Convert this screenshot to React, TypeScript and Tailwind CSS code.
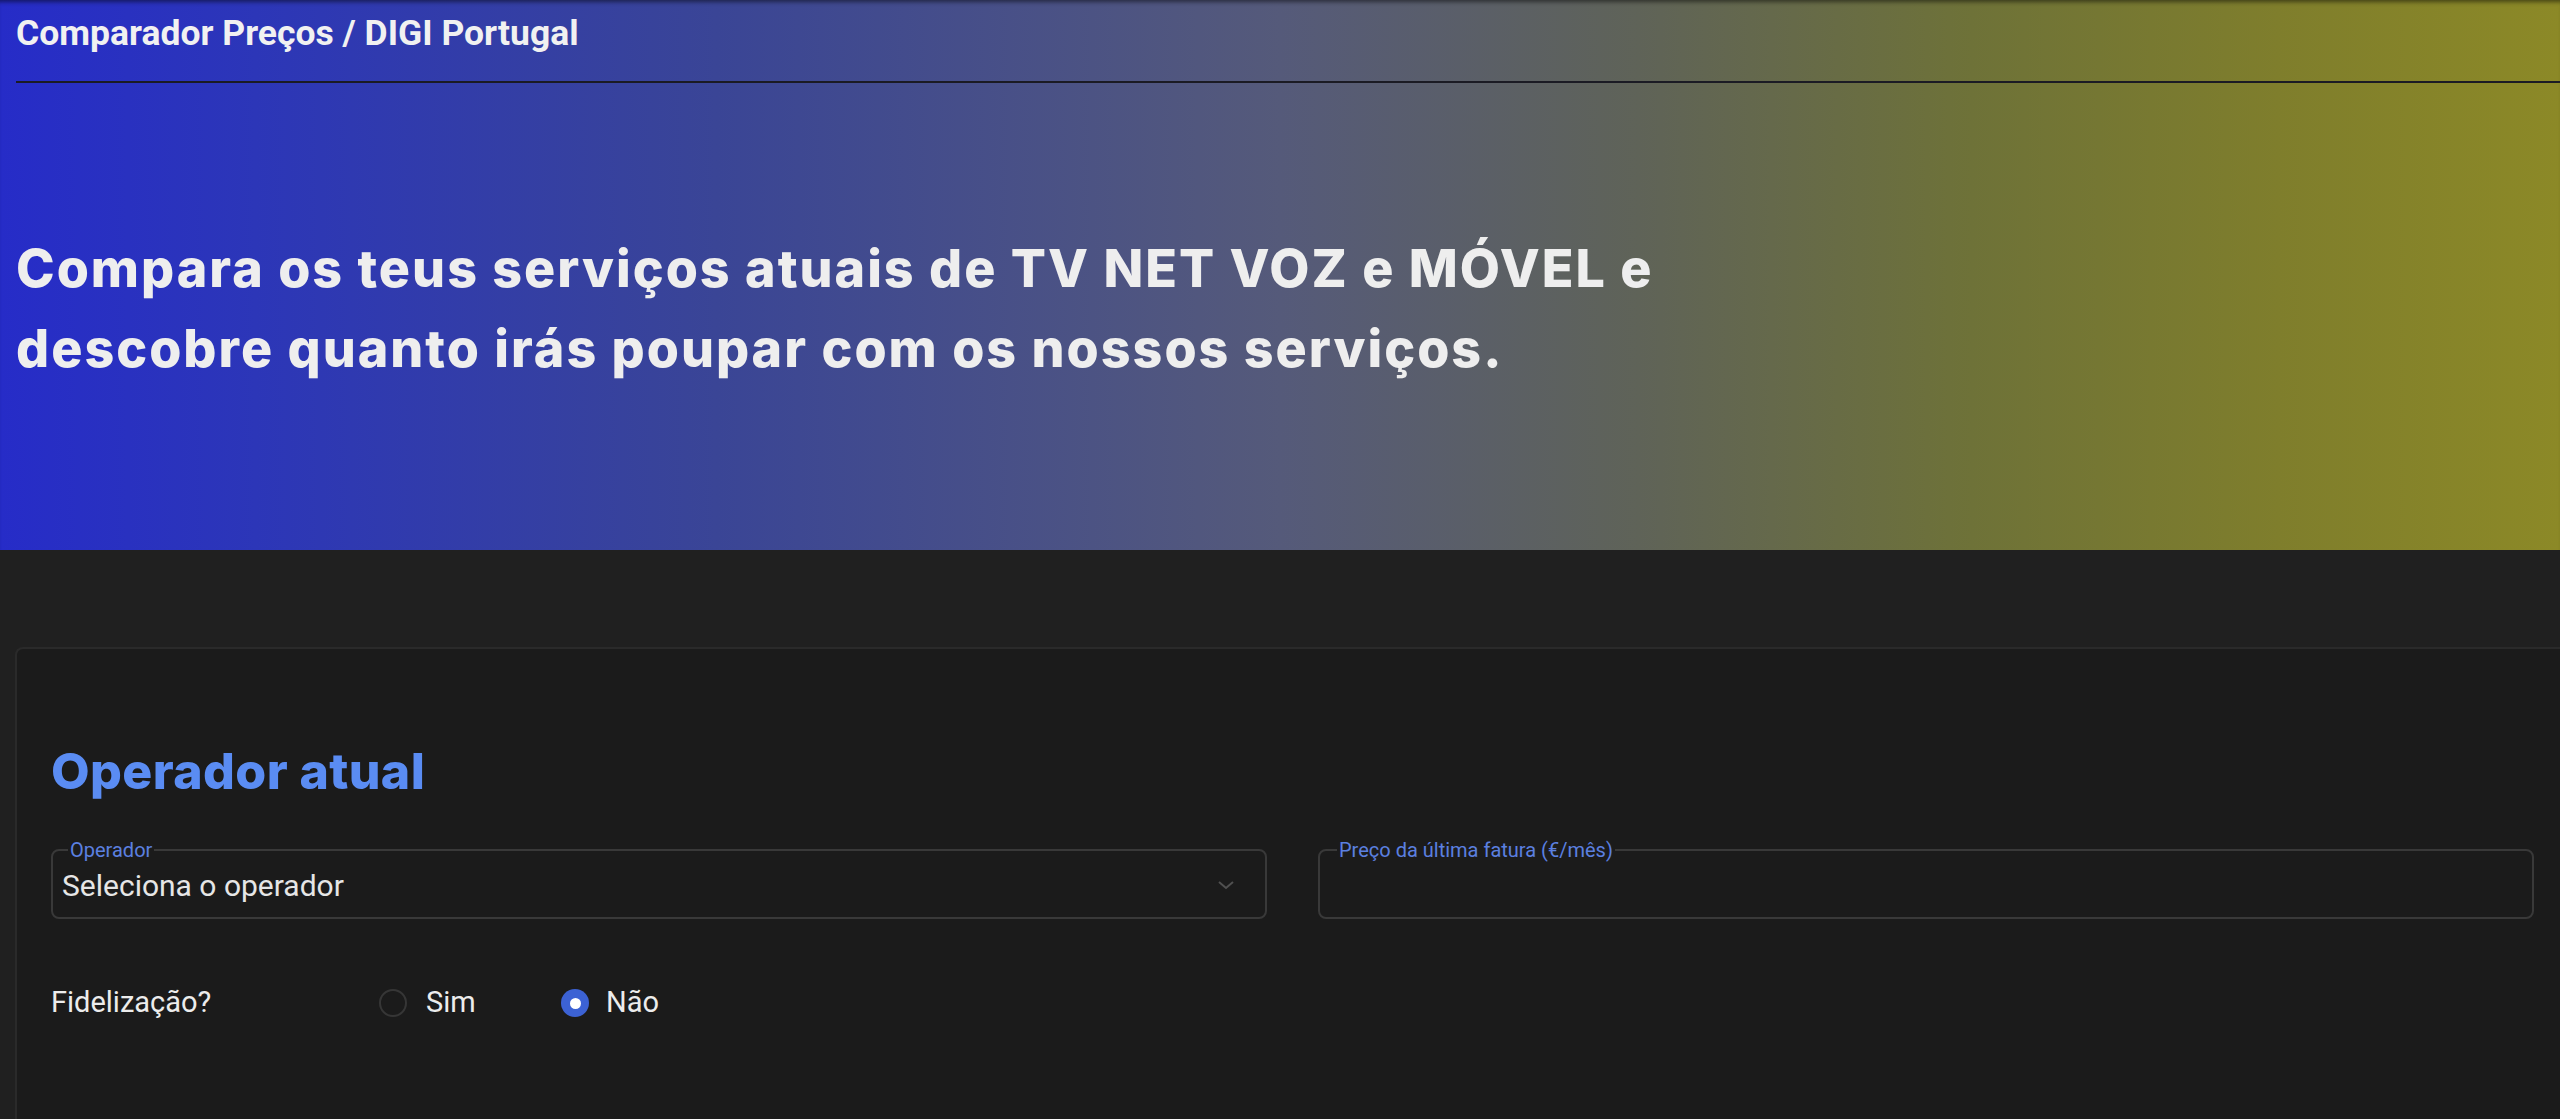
/**
 * Comparador de preços DIGI: hero with title, then "Operador atual" form card.
 */
import { useState } from "react";

function Radio({ checked }: { checked: boolean }) {
  return checked ? (
    <span className="flex h-[28px] w-[28px] items-center justify-center rounded-full bg-[#3c62d4]">
      <span className="h-[11px] w-[11px] rounded-full bg-white" />
    </span>
  ) : (
    <span className="h-[28px] w-[28px] rounded-full border-2 border-[#363636]" />
  );
}

export default function App() {
  const [fidelizacao, setFidelizacao] = useState<"sim" | "nao">("nao");

  return (
    <div className="min-h-screen bg-[#202020] font-['Roboto','Liberation_Sans',sans-serif] text-[#ececec]">
      {/* Hero */}
      <header className="h-[550px] bg-[linear-gradient(to_right,#262cc8_0%,#2c36b8_10%,#3a4596_28%,#555a7a_50%,#5f6358_64%,#6e7238_77%,#7f7e2c_89%,#8c8927_100%)] shadow-[inset_0_5px_4px_-3px_rgba(0,0,0,0.5)]">
        <div className="pl-4 pt-[13px]">
          <p className="text-[35.5px] font-bold leading-[40px] text-[#f1f1f1]">
            Comparador Preços / DIGI Portugal
          </p>
        </div>
        <div className="ml-4 mt-[28px] h-[2px] bg-[#1b1b24]" />
        <h1 className="mt-[146px] pl-4 font-['Inter',sans-serif] text-[52px] font-extrabold leading-[80px] tracking-[2px] text-[#eeeeee]">
          Compara os teus serviços atuais de TV NET VOZ e MÓVEL e
          <br />
          descobre quanto irás poupar com os nossos serviços.
        </h1>
      </header>

      {/* Form card */}
      <main className="pl-[15px] pt-[97px]">
        <section className="rounded-tl-lg border-l-2 border-t-2 border-[#2a2a2a] bg-[#1b1b1b] pb-[200px] pl-[34px] pr-[26px] pt-[92px]">
          <h2 className="font-['Inter',sans-serif] text-[50px] font-extrabold leading-[60px] tracking-[0.4px] text-[#5a8cf3]">
            Operador atual
          </h2>

          <div className="mt-[39px] grid grid-cols-2 gap-[51px]">
            <fieldset className="h-[79px] rounded-lg border-2 border-[#393939] px-[9px] pb-[7px]">
              <legend className="ml-[6px] px-[2px] text-[20px] leading-[20px] text-[#5b80e0]">
                Operador
              </legend>
              <div className="flex h-[50px] items-center justify-between pr-[20px]">
                <span className="text-[30px] text-[#e6e6e6]">Seleciona o operador</span>
                <svg width="20" height="12" viewBox="0 0 20 12" fill="none" stroke="#505050" strokeWidth="2">
                  <path d="M3 3l7 6 7-6" />
                </svg>
              </div>
            </fieldset>

            <fieldset className="h-[79px] rounded-lg border-2 border-[#393939] px-[9px] pb-[7px]">
              <legend className="ml-[8px] px-[2px] text-[20px] leading-[20px] text-[#5b80e0]">
                Preço da última fatura (€/mês)
              </legend>
              <input
                type="text"
                className="h-[50px] w-full bg-transparent text-[30px] text-[#e6e6e6] outline-none"
              />
            </fieldset>
          </div>

          <div className="mt-[64px] flex h-[40px] items-center text-[29px]">
            <span className="w-[328px]">Fidelização?</span>
            <button type="button" onClick={() => setFidelizacao("sim")} className="flex w-[182px] items-center gap-[19px]">
              <Radio checked={fidelizacao === "sim"} />
              <span>Sim</span>
            </button>
            <button type="button" onClick={() => setFidelizacao("nao")} className="flex items-center gap-[17px]">
              <Radio checked={fidelizacao === "nao"} />
              <span>Não</span>
            </button>
          </div>
        </section>
      </main>
    </div>
  );
}
